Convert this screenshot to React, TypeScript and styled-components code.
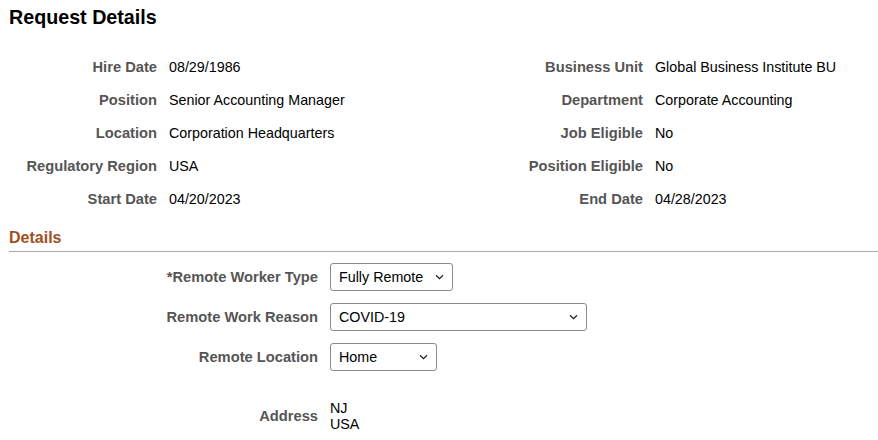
import React from "react";
import styled, { createGlobalStyle } from "styled-components";

const GlobalStyle = createGlobalStyle`
  html, body { margin: 0; padding: 0; background: #fff; }
  body { font-family: Arial, "Liberation Sans", sans-serif; color: #000; }
`;

const Page = styled.div`
  width: 878px;
  height: 440px;
  overflow: hidden;
  padding: 6px 0 0 9px;
  box-sizing: border-box;
`;

const Title = styled.h1`
  margin: 0;
  font-size: 19.7px;
  line-height: 22px;
  font-weight: bold;
  color: #000;
`;

const InfoGrid = styled.div`
  display: grid;
  grid-template-columns: 148px 270px 192px 1fr;
  grid-auto-rows: 33px;
  column-gap: 12px;
  margin-top: 23px;
`;

const Label = styled.div`
  text-align: right;
  font-weight: bold;
  font-size: 14.7px;
  line-height: 33px;
  color: #555;
  white-space: nowrap;
`;

const Value = styled.div`
  font-size: 14.3px;
  line-height: 33px;
  color: #000;
  white-space: nowrap;
`;

const SectionHeader = styled.div`
  margin-top: 13px;
  font-size: 16px;
  line-height: 18px;
  font-weight: bold;
  color: #a0501e;
  padding-bottom: 4px;
  border-bottom: 1px solid #aca8a2;
`;

const FormGrid = styled.div`
  display: grid;
  grid-template-columns: 309px 1fr;
  column-gap: 12px;
  row-gap: 12px;
  margin-top: 11px;
  align-items: center;
`;

const FormLabel = styled.div<{ $top?: number }>`
  text-align: right;
  font-weight: bold;
  font-size: 14.7px;
  color: #555;
  white-space: nowrap;
  margin-top: ${(p) => p.$top ?? 0}px;
`;

const SelectBox = styled.div<{ $w: number }>`
  width: ${(p) => p.$w}px;
  height: 28px;
  box-sizing: border-box;
  border: 1px solid #8a8a8a;
  border-radius: 3px;
  display: flex;
  align-items: center;
  justify-content: space-between;
  padding: 0 8px 0 8px;
  font-size: 14.3px;
  color: #000;
  background: #fff;
`;

const AddressLines = styled.div<{ $top?: number }>`
  font-size: 14.3px;
  line-height: 16px;
  color: #000;
  margin-top: ${(p) => p.$top ?? 0}px;
`;

const Chevron = () => (
  <svg width="9" height="6" viewBox="0 0 9 6" fill="none">
    <path d="M1 1.2 L4.5 4.6 L8 1.2" stroke="#222" strokeWidth="1.3" />
  </svg>
);

const Select = ({ value, width }: { value: string; width: number }) => (
  <div>
    <SelectBox $w={width}>
      <span>{value}</span>
      <Chevron />
    </SelectBox>
  </div>
);

const rows: [string, string, string, string][] = [
  ["Hire Date", "08/29/1986", "Business Unit", "Global Business Institute BU"],
  ["Position", "Senior Accounting Manager", "Department", "Corporate Accounting"],
  ["Location", "Corporation Headquarters", "Job Eligible", "No"],
  ["Regulatory Region", "USA", "Position Eligible", "No"],
  ["Start Date", "04/20/2023", "End Date", "04/28/2023"],
];

export default function App() {
  return (
    <>
      <GlobalStyle />
      <Page>
        <Title>Request Details</Title>
        <InfoGrid>
          {rows.map((r) => (
            <React.Fragment key={r[0]}>
              <Label>{r[0]}</Label>
              <Value>{r[1]}</Value>
              <Label>{r[2]}</Label>
              <Value>{r[3]}</Value>
            </React.Fragment>
          ))}
        </InfoGrid>
        <SectionHeader>Details</SectionHeader>
        <FormGrid>
          <FormLabel>*Remote Worker Type</FormLabel>
          <Select value="Fully Remote" width={123} />
          <FormLabel>Remote Work Reason</FormLabel>
          <Select value="COVID-19" width={257} />
          <FormLabel>Remote Location</FormLabel>
          <Select value="Home" width={107} />
          <FormLabel $top={17}>Address</FormLabel>
          <AddressLines $top={17}>
            NJ
            <br />
            USA
          </AddressLines>
        </FormGrid>
      </Page>
    </>
  );
}
